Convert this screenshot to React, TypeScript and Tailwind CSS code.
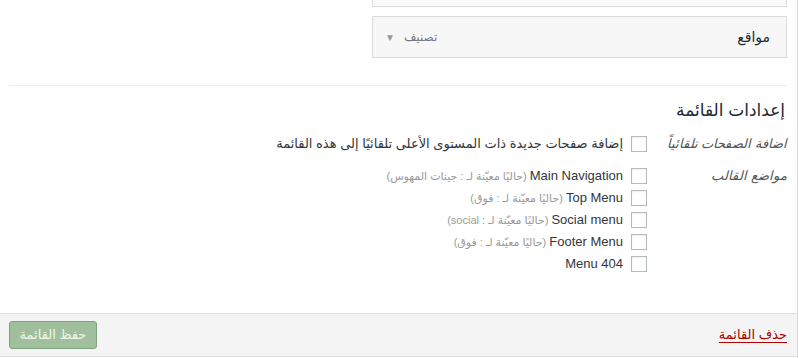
import React from 'react';

const LOCATIONS = [
    { name: 'Main Navigation', note: '(حاليًا معيّنة لـ : جينات المهوس)' },
    { name: 'Top Menu', note: '(حاليًا معيّنة لـ : فوق)' },
    { name: 'Social menu', note: '(حاليًا معيّنة لـ : social)' },
    { name: 'Footer Menu', note: '(حاليًا معيّنة لـ : فوق)' },
    { name: 'Menu 404', note: '' },
];

const Checkbox: React.FC = () => (
    <span className="inline-block w-[16px] h-[16px] shrink-0 bg-white border border-[#b4b9be] shadow-[inset_0_1px_2px_rgba(0,0,0,0.07)]"></span>
);

export default function App() {
    return (
        <div
            dir="rtl"
            className="w-[798px] h-[358px] bg-white border-r border-[#dcdcde] flex flex-col text-[#32373c]"
            style={{ fontFamily: '"Liberation Sans", "DejaVu Sans", sans-serif' }}
        >
            <div className="pr-[10px] pl-[9px]">
                {/* Previous accordion box (cut off) */}
                <div className="w-[415px] h-[7px] bg-[#fafafa] border-x border-b border-[#dcdcde]"></div>

                {/* Locations accordion */}
                <div className="w-[415px] h-[42px] mt-[9px] bg-[#f7f7f7] border border-[#dcdcde] flex items-center justify-between pr-[16px] pl-[12px]">
                    <span className="text-[14px] text-[#23282d]">مواقع</span>
                    <span className="flex items-center gap-[9px] text-[12px] text-[#72777c]">
                        <span>تصنيف</span>
                        <span className="text-[10px] text-[#999]">▼</span>
                    </span>
                </div>

                <div className="mt-[27px] border-t border-[#eeeeee]"></div>

                {/* Menu settings */}
                <h3 className="mt-[13px] pr-[2px] text-[17px] leading-[24px] text-[#23282d]">إعدادات القائمة</h3>

                <div className="mt-[10px] flex items-center h-[22px]">
                    <div className="w-[140px] shrink-0 italic text-[13px] text-[#555]">اضافة الصفحات تلقائياً</div>
                    <label className="flex items-center gap-[8px] text-[13px] text-[#32373c]">
                        <Checkbox />
                        <span>إضافة صفحات جديدة ذات المستوى الأعلى تلقائيًا إلى هذه القائمة</span>
                    </label>
                </div>

                <div className="mt-[10px] flex items-start">
                    <div className="w-[140px] shrink-0 h-[22px] flex items-center italic text-[13px] text-[#555]">مواضع القالب</div>
                    <div className="flex flex-col">
                        {LOCATIONS.map((loc) => (
                            <label key={loc.name} className="flex items-center gap-[8px] h-[22px] text-[13px] text-[#32373c]">
                                <Checkbox />
                                <span>
                                    <span dir="ltr">{loc.name}</span>
                                    {loc.note && <span className="text-[11px] text-[#999]"> {loc.note}</span>}
                                </span>
                            </label>
                        ))}
                    </div>
                </div>
            </div>

            {/* Footer */}
            <div className="mt-auto mb-[1px] h-[44px] bg-[#f4f4f4] border-t border-b border-[#dfdfdf] flex items-center justify-between pr-[10px] pl-[9px]">
                <a href="#" className="text-[13px] text-[#a00] underline underline-offset-[3px]">حذف القائمة</a>
                <button className="w-[88px] h-[28px] rounded-[3px] bg-[#9fbf9d] border border-[#80a37f] text-[13px] text-[#eef5ee]">حفظ القائمة</button>
            </div>
        </div>
    );
}
